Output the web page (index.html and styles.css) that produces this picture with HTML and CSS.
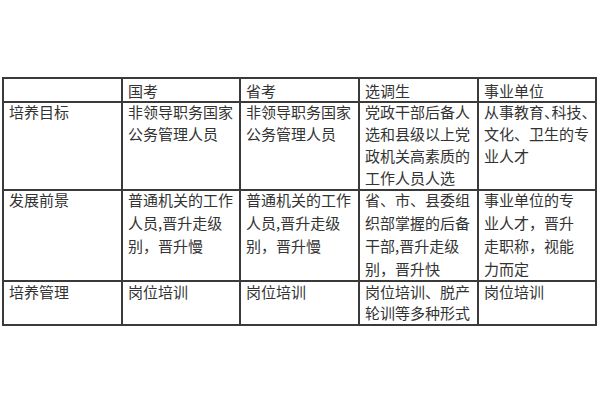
FILE: index.html
```html
<!DOCTYPE html>
<html lang="zh-CN">
<head>
<meta charset="utf-8">
<title>对比表</title>
<link rel="stylesheet" href="styles.css">
</head>
<body>
<table class="cmp">
  <colgroup>
    <col class="c1"><col class="c2"><col class="c3"><col class="c4"><col class="c5">
  </colgroup>
  <tr class="r-head">
    <td><div class="txt"></div></td>
    <td><div class="txt">国考</div></td>
    <td><div class="txt">省考</div></td>
    <td><div class="txt">选调生</div></td>
    <td><div class="txt">事业单位</div></td>
  </tr>
  <tr class="r-goal">
    <td><div class="txt">培养目标</div></td>
    <td><div class="txt">非领导职务国家<br>公务管理人员</div></td>
    <td><div class="txt">非领导职务国家<br>公务管理人员</div></td>
    <td><div class="txt">党政干部后备人<br>选和县级以上党<br>政机关高素质的<br>工作人员人选</div></td>
    <td><div class="txt"><span class="half">从事教育、科技、</span><br>文化、卫生的专<br>业人才</div></td>
  </tr>
  <tr class="r-future">
    <td><div class="txt">发展前景</div></td>
    <td><div class="txt">普通机关的工作<br>人员,晋升走级<br>别，晋升慢</div></td>
    <td><div class="txt">普通机关的工作<br>人员,晋升走级<br>别，晋升慢</div></td>
    <td><div class="txt">省、市、县委组<br>织部掌握的后备<br>干部,晋升走级<br>别，晋升快</div></td>
    <td><div class="txt">事业单位的专<br>业人才，晋升<br>走职称，视能<br>力而定</div></td>
  </tr>
  <tr class="r-manage">
    <td><div class="txt">培养管理</div></td>
    <td><div class="txt">岗位培训</div></td>
    <td><div class="txt">岗位培训</div></td>
    <td><div class="txt">岗位培训、脱产<br>轮训等多种形式</div></td>
    <td><div class="txt">岗位培训</div></td>
  </tr>
</table>
</body>
</html>
```

FILE: styles.css
```css
html, body {
  margin: 0;
  padding: 0;
  background: #ffffff;
}
body {
  font-family: "Noto Sans CJK SC", "Liberation Sans", sans-serif;
  color: #333333;
}
.cmp {
  margin: 77px 0 0 2px;
  border-collapse: collapse;
  table-layout: fixed;
  width: 595px;
  font-size: 15px;
  line-height: 20px;
}
.c1 { width: 119px; }
.c2 { width: 118px; }
.c3 { width: 119px; }
.c4 { width: 119px; }
.c5 { width: 118px; }
.cmp td {
  border: 2px solid #3a3a3a;
  vertical-align: top;
  padding: 1px 4px 0 5px;
}
.txt {
  white-space: nowrap;
}
.half {
  font-feature-settings: "halt";
}
.r-head td { height: 20px; }
.r-head .txt { margin-top: 1px; }
.r-goal td { height: 85px; line-height: 22px; }
.r-goal .txt { margin-top: -3px; }
.r-future td { height: 85px; line-height: 23px; }
.r-future .txt { margin-top: -4px; }
.r-manage td { height: 41px; line-height: 21px; }
.r-manage .txt { margin-top: -2px; }
```
